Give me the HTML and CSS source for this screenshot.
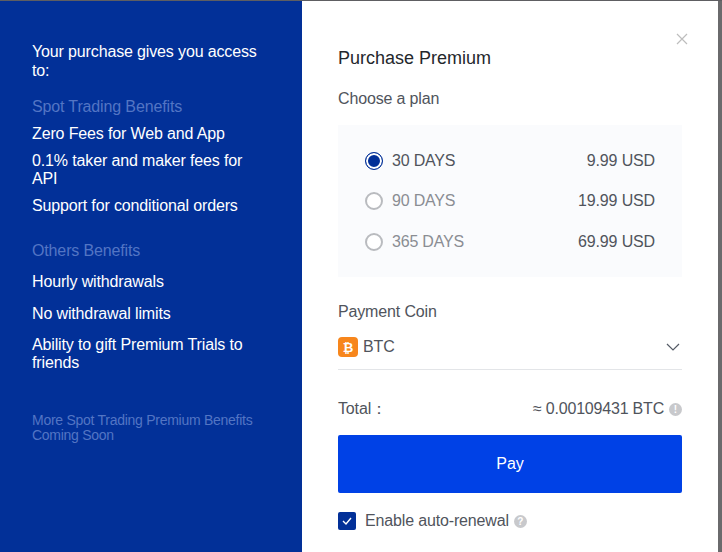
FILE: index.html
```html
<!DOCTYPE html>
<html lang="en">
<head>
<meta charset="utf-8">
<title>Purchase Premium</title>
<link rel="stylesheet" href="styles.css">
</head>
<body>
<div class="modal">
  <aside class="side">
    <p class="lead">Your purchase gives you access to:</p>
    <h3 class="group-title">Spot Trading Benefits</h3>
    <ul class="list list-first">
      <li>Zero Fees for Web and App</li>
      <li>0.1% taker and maker fees for API</li>
      <li>Support for conditional orders</li>
    </ul>
    <h3 class="group-title group-two">Others Benefits</h3>
    <ul class="list list-second">
      <li>Hourly withdrawals</li>
      <li>No withdrawal limits</li>
      <li>Ability to gift Premium Trials to friends</li>
    </ul>
    <p class="more">More Spot Trading Premium Benefits Coming Soon</p>
  </aside>
  <main class="main">
    <svg class="close" width="12" height="12" viewBox="0 0 12 12" aria-label="Close"><path d="M1 1l10 10M11 1L1 11" stroke="#bdbdbd" stroke-width="1.2" fill="none"/></svg>
    <h2 class="title">Purchase Premium</h2>
    <div class="label">Choose a plan</div>
    <div class="plans">
      <div class="plan active"><span class="radio"></span><span class="days">30 DAYS</span><span class="price">9.99 USD</span></div>
      <div class="plan"><span class="radio"></span><span class="days">90 DAYS</span><span class="price">19.99 USD</span></div>
      <div class="plan"><span class="radio"></span><span class="days">365 DAYS</span><span class="price">69.99 USD</span></div>
    </div>
    <div class="label coin-label">Payment Coin</div>
    <div class="select">
      <span class="coin"><svg width="20" height="20" viewBox="0 0 20 20"><rect width="20" height="20" rx="4" fill="#f7861c"/><text x="10" y="15" text-anchor="middle" class="coin-glyph">₿</text></svg></span>
      <span class="coin-name">BTC</span>
      <svg class="chev" width="14" height="8" viewBox="0 0 14 8"><path d="M1 1l6 6 6-6" stroke="#555b66" stroke-width="1.2" fill="none"/></svg>
    </div>
    <div class="total">
      <span>Total：</span>
      <span class="amount">≈ 0.00109431 BTC<span class="hint hint-total">!</span></span>
    </div>
    <button class="pay" type="button">Pay</button>
    <label class="renew">
      <span class="check"><svg width="12" height="10" viewBox="0 0 12 10"><path d="M2 5l3 3 5-6" stroke="#fff" stroke-width="1.4" fill="none"/></svg></span>
      <span>Enable auto-renewal</span><span class="hint">?</span>
    </label>
  </main>
  <div class="edge"></div>
</div>
</body>
</html>
```
FILE: styles.css
```css
* { box-sizing: border-box; }
html, body { margin: 0; padding: 0; height: 100%; overflow: hidden; }
body { font-family: "Liberation Sans", Arial, sans-serif; background: #5e5e62; padding-top: 1px; }
.modal { display: flex; width: 722px; height: 551px; background: #fff; }
.side { width: 302px; flex: none; background: #023098; color: #fff; padding: 41px 38px 0 32px; font-size: 16px; line-height: 18px; letter-spacing: -0.14px; }
.lead { margin: 0; line-height: 19px; }
.group-title { margin: 18px 0 0; font-size: 16px; font-weight: 400; line-height: 18px; color: #5375c4; }
.group-two { margin-top: 27px; }
.list { margin: 0; padding: 0; list-style: none; }
.list-first { margin-top: 9px; }
.list-first li + li { margin-top: 9px; }
.list-second { margin-top: 13px; }
.list-second li + li { margin-top: 14px; }
.list-second li:last-child { margin-top: 13px; }
.more { margin: 41px 0 0; font-size: 14px; line-height: 15px; letter-spacing: -0.27px; color: #5375c4; }
.main { width: 416px; flex: none; position: relative; padding: 47px 36px 0; color: #3c4048; letter-spacing: -0.15px; }
.close { position: absolute; top: 32px; right: 30px; }
.title { margin: 0; font-size: 18px; font-weight: 400; line-height: 20px; letter-spacing: 0; color: #24272c; }
.label { margin-top: 21px; font-size: 16px; line-height: 20px; color: #50545c; }
.plans { margin-top: 16px; height: 152px; padding: 15.5px 27px 0; background: #fafbfd; }
.plan { display: flex; align-items: center; height: 40.5px; font-size: 16px; color: #8a8d93; }
.plan.active { color: #50545c; }
.radio { width: 18px; height: 18px; margin-right: 9px; border: 2px solid #b9bbbf; border-radius: 50%; background: #fff; }
.active .radio { border: 1.5px solid #023098; background: #023098; box-shadow: inset 0 0 0 2px #fff; }
.days { letter-spacing: -0.2px; }
.price { margin-left: auto; color: #50545c; }
.coin-label { margin-top: 25px; }
.select { display: flex; align-items: center; height: 41px; margin-top: 7px; border-bottom: 1px solid #e3e5e8; padding-bottom: 5px; font-size: 16px; color: #50545c; }
.coin { display: flex; margin-right: 5px; }
.coin-glyph { font-family: "DejaVu Sans", sans-serif; font-size: 13px; font-weight: 700; fill: #fff; }
.coin-name { line-height: 20px; }
.chev { margin-left: auto; margin-right: 2px; }
.total { display: flex; justify-content: space-between; align-items: center; margin-top: 29px; font-size: 16px; line-height: 20px; color: #50545c; }
.amount { display: flex; align-items: center; letter-spacing: -0.2px; }
.hint { display: inline-flex; align-items: center; justify-content: center; width: 13px; height: 13px; margin-left: 5px; border-radius: 50%; background: #c8c9cc; color: #fff; font-size: 10px; line-height: 13px; font-weight: 700; letter-spacing: 0; }
.pay { display: block; width: 344px; height: 58px; margin-top: 16px; border: 0; border-radius: 2px; background: #0041e6; color: #fff; font: 16px/20px "Liberation Sans", Arial, sans-serif; }
.renew { display: flex; align-items: center; margin-top: 18px; font-size: 16px; line-height: 20px; color: #50545c; }
.check { display: flex; align-items: center; justify-content: center; width: 18px; height: 18px; margin-right: 9px; border-radius: 2px; background: #023098; }
.edge { flex: 1; background: #6a6a6c; }
```
